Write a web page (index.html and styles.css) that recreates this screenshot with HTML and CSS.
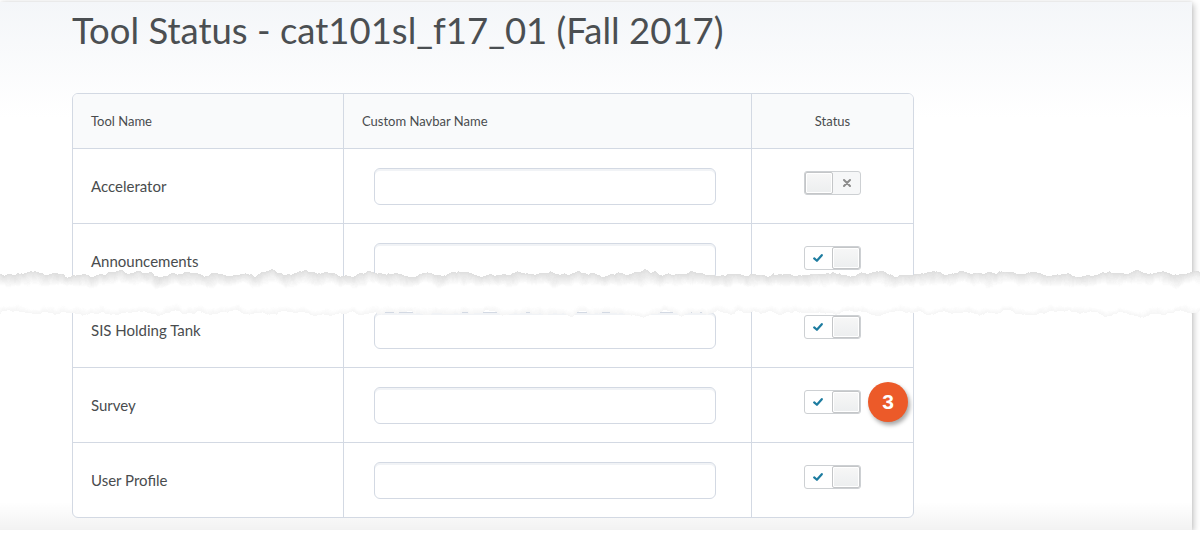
FILE: index.html
```html
<!doctype html>
<html>
<head>
<meta charset="utf-8">
<title>Tool Status</title>
<link rel="stylesheet" href="styles.css">
</head>
<body>
	<div class="frame">
		<h1 class="title">Tool Status - cat101sl_f17_01 (Fall 2017)</h1>
		<div class="tbl">
			<div class="row head">
				<div class="cell c1">Tool Name</div>
				<div class="cell c2">Custom Navbar Name</div>
				<div class="cell c3">Status</div>
			</div>
			<div class="row">
				<div class="cell c1">Accelerator</div>
				<div class="cell c2"><input type="text" class="nav-input"></div>
				<div class="cell c3">
					<span class="toggle off"><span class="knob"></span><span class="mark"><svg width="8" height="8" viewBox="0 0 8 8"><path d="M1 1L7 7M7 1L1 7" stroke="#8c8c8c" stroke-width="2" stroke-linecap="round"/></svg></span></span>
				</div>
			</div>
			<div class="row cut">
				<div class="cell c1">Announcements</div>
				<div class="cell c2"><input type="text" class="nav-input"></div>
				<div class="cell c3">
					<span class="toggle on"><span class="mark"><svg width="10" height="8" viewBox="0 0 10 8"><path d="M1.2 4.4L3.9 6.8L8.8 1.2" fill="none" stroke="#1d7ca0" stroke-width="2.2" stroke-linecap="round" stroke-linejoin="round"/></svg></span><span class="knob"></span></span>
				</div>
			</div>
			<div class="row">
				<div class="cell c1">SIS Holding Tank</div>
				<div class="cell c2"><input type="text" class="nav-input"></div>
				<div class="cell c3">
					<span class="toggle on"><span class="mark"><svg width="10" height="8" viewBox="0 0 10 8"><path d="M1.2 4.4L3.9 6.8L8.8 1.2" fill="none" stroke="#1d7ca0" stroke-width="2.2" stroke-linecap="round" stroke-linejoin="round"/></svg></span><span class="knob"></span></span>
				</div>
			</div>
			<div class="row">
				<div class="cell c1">Survey</div>
				<div class="cell c2"><input type="text" class="nav-input"></div>
				<div class="cell c3">
					<span class="toggle-wrap">
						<span class="toggle on"><span class="mark"><svg width="10" height="8" viewBox="0 0 10 8"><path d="M1.2 4.4L3.9 6.8L8.8 1.2" fill="none" stroke="#1d7ca0" stroke-width="2.2" stroke-linecap="round" stroke-linejoin="round"/></svg></span><span class="knob"></span></span>
						<span class="badge">3</span>
					</span>
				</div>
			</div>
			<div class="row">
				<div class="cell c1">User Profile</div>
				<div class="cell c2"><input type="text" class="nav-input"></div>
				<div class="cell c3">
					<span class="toggle on"><span class="mark"><svg width="10" height="8" viewBox="0 0 10 8"><path d="M1.2 4.4L3.9 6.8L8.8 1.2" fill="none" stroke="#1d7ca0" stroke-width="2.2" stroke-linecap="round" stroke-linejoin="round"/></svg></span><span class="knob"></span></span>
				</div>
			</div>
		</div>
	</div>

	<!-- torn paper gap -->
	<svg class="tear" width="1200" height="70" viewBox="0 0 1200 70">
		<defs>
			<filter id="rough" filterUnits="userSpaceOnUse" x="0" y="0" width="1200" height="70">
				<feTurbulence type="fractalNoise" baseFrequency="0.06 0.03" numOctaves="4" seed="7" result="noise"/>
				<feDisplacementMap in="SourceGraphic" in2="noise" scale="13" xChannelSelector="G" yChannelSelector="R" result="torn"/>
				<feGaussianBlur in="torn" stdDeviation="0.4"/>
			</filter>
			<linearGradient id="shadeTop" x1="0" y1="0" x2="0" y2="1">
				<stop offset="0" stop-color="#000" stop-opacity="0.13"/>
				<stop offset="1" stop-color="#000" stop-opacity="0"/>
			</linearGradient>
			<linearGradient id="shadeBot" x1="0" y1="0" x2="0" y2="1">
				<stop offset="0" stop-color="#000" stop-opacity="0"/>
				<stop offset="1" stop-color="#000" stop-opacity="0.04"/>
			</linearGradient>
		</defs>
		<g filter="url(#rough)">
			<rect x="-20" y="17" width="1240" height="39" fill="#fff"/>
			<rect x="-20" y="17" width="1240" height="12" fill="url(#shadeTop)"/>
			<rect x="-20" y="50" width="1240" height="6" fill="url(#shadeBot)"/>
		</g>
	</svg>
</body>
</html>
```

FILE: styles.css
```css
body{ margin:0; background:#fff; position:relative; font-family:Lato, "Open Sans", sans-serif; color:#494c4e;}
.frame{ width:1192px; height:528px; margin-top:2px; box-sizing:border-box; padding:0 0 0 72px;
	background:linear-gradient(to top, rgba(0,0,0,0.05), rgba(0,0,0,0) 28px), linear-gradient(#f4f6f9 0, #fff 115px);
	box-shadow:2px 2px 6px rgba(0,0,0,0.22), 0 -1px 3px rgba(0,0,0,0.06);}
.title{ margin:0; padding-top:6px; height:91px; box-sizing:border-box; font-size:36.5px; font-weight:400; line-height:44px; color:#4b4f52;}

.tbl{ display:grid; grid-template-columns:271px 408px 161px; width:842px; box-sizing:border-box; border:1px solid #d3d9e3; border-radius:6px; overflow:hidden; background:#fff;}
.row{ display:contents;}
.cell{ height:75px; box-sizing:border-box; border-top:1px solid #d3d9e3; display:flex; align-items:center; font-size:15px;}
.c1{ border-right:1px solid #d3d9e3; padding-left:18px;}
.c2{ border-right:1px solid #d3d9e3; padding-left:30px;}
.c3{ justify-content:center;}
.head .cell{ height:54px; border-top:0; background:#f9fafb; font-size:13px;}
.head .c2{ padding-left:18px;}
.cut .cell{ height:69px; padding-top:6px;}

.nav-input{ width:342px; height:37px; box-sizing:border-box; margin:0; border:1px solid #d3d9e3; border-radius:6px; background:#fff; box-shadow:inset 0 2px 0 rgba(185,194,208,0.2); outline:none;}

.toggle{ display:flex; width:57px; height:24px; box-sizing:border-box; border:1px solid #cdd0d3; border-radius:3px; background:#fff; margin-bottom:6px;}
.toggle .knob{ width:28px; height:22px; box-sizing:border-box; border:1px solid #c4c6c8; border-radius:2px; background:linear-gradient(#f7f7f7, #eceeef); box-shadow:inset 0 0 0 1px #fff;}
.toggle .mark{ flex:1; display:flex; align-items:center; justify-content:center;}
.toggle.off{ background:#f6f7f8;}
.toggle.on .mark{ padding-right:2px;}

.toggle-wrap{ position:relative; display:inline-block;}
.badge{ position:absolute; left:64px; top:-8px; width:40px; height:40px; border-radius:50%; background:#ec5a29; color:#fff; font-family:"Liberation Sans", Arial, sans-serif; font-weight:700; font-size:21px; line-height:40px; text-align:center; box-shadow:2px 3px 4px rgba(0,0,0,0.35);}

.tear{ position:absolute; left:0; top:257px; display:block;}
```
